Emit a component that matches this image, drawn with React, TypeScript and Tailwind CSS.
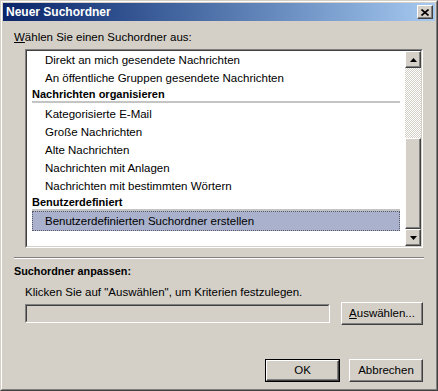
import React from 'react';

const raised =
  'border border-t-white border-l-white border-r-[#404040] border-b-[#404040] shadow-[inset_-1px_-1px_0_#808080]';

function ListRow({ text, header, line, spacer, selected }: { text: string; header?: boolean; line?: boolean; spacer?: boolean; selected?: boolean }) {
  if (header) {
    return (
      <div>
        <div className="h-[14px] leading-[14px] font-bold text-[11px]">{text}</div>
        {line && <div className="h-[2px] bg-[#c4c4c4]" />}
        {spacer && <div className="h-[2px]" />}
      </div>
    );
  }
  if (selected) {
    return (
      <div className="h-[20px] leading-[18px] pl-[12px] bg-[#a9b1cc] border border-dotted border-[#5a5a6a]">{text}</div>
    );
  }
  return <div className="h-[18px] leading-[18px] pl-[13px]">{text}</div>;
}

function Arrow({ down }: { down?: boolean }) {
  return (
    <svg width="7" height="4" viewBox="0 0 7 4">
      {down ? <path d="M0 0h7L3.5 4z" fill="#000" /> : <path d="M0 4h7L3.5 0z" fill="#000" />}
    </svg>
  );
}

function Button({ label, accel, isDefault, w }: { label: string; accel?: boolean; isDefault?: boolean; w: string }) {
  const content = accel ? (
    <>
      <span className="underline underline-offset-1">{label[0]}</span>
      {label.slice(1)}
    </>
  ) : (
    label
  );
  if (isDefault) {
    return (
      <div className={`${w} h-[23px] border border-black`}>
        <div className={`h-full w-full flex items-center justify-center ${raised} bg-[#d4d0c8]`}>{content}</div>
      </div>
    );
  }
  return <div className={`${w} h-[23px] flex items-center justify-center ${raised} bg-[#d4d0c8]`}>{content}</div>;
}

export default function App() {
  return (
    <div className="w-[438px] h-[391px] bg-[#d4d0c8] font-['Liberation_Sans',Arial,sans-serif] text-[11.5px] text-black border border-t-[#d4d0c8] border-l-[#d4d0c8] border-r-[#404040] border-b-[#404040]">
      <div className="h-full w-full border border-t-white border-l-white border-r-[#808080] border-b-[#808080] p-px flex flex-col">
        {/* Title bar */}
        <div className="h-[18px] flex items-center justify-between bg-gradient-to-r from-[#0a246a] to-[#a6caf0] pl-[3px] pr-[2px]">
          <span className="text-white font-bold text-[12px] leading-[18px]">Neuer Suchordner</span>
          <div className={`w-[16px] h-[14px] bg-[#d4d0c8] flex items-center justify-center ${raised}`}>
            <svg width="8" height="7" viewBox="0 0 8 7">
              <path d="M0.5 0.5l7 6M7.5 0.5l-7 6" stroke="#000" strokeWidth="1.6" />
            </svg>
          </div>
        </div>

        <div className="pl-[11px] mt-[9px] h-[14px] leading-[14px]">
          <span className="underline underline-offset-1">W</span>ählen Sie einen Suchordner aus:
        </div>

        {/* List box */}
        <div className="ml-[22px] mt-[5px] w-[398px] h-[199px] border border-t-[#808080] border-l-[#808080] border-r-white border-b-white">
          <div className="h-full w-full border border-t-[#404040] border-l-[#404040] border-r-[#d4d0c8] border-b-[#d4d0c8] bg-white flex">
            <div className="flex-1 px-[5px] overflow-hidden whitespace-nowrap">
              <ListRow text="Direkt an mich gesendete Nachrichten" />
              <ListRow text="An öffentliche Gruppen gesendete Nachrichten" />
              <ListRow text="Nachrichten organisieren" header line spacer />
              <ListRow text="Kategorisierte E-Mail" />
              <ListRow text="Große Nachrichten" />
              <ListRow text="Alte Nachrichten" />
              <ListRow text="Nachrichten mit Anlagen" />
              <ListRow text="Nachrichten mit bestimmten Wörtern" />
              <ListRow text="Benutzerdefiniert" header line />
              <ListRow text="Benutzerdefinierten Suchordner erstellen" selected />
            </div>
            {/* Scrollbar */}
            <div className="w-[16px] flex flex-col">
              <div className={`h-[17px] bg-[#d4d0c8] flex items-center justify-center ${raised}`}>
                <Arrow />
              </div>
              <div className="flex-1 bg-[repeating-conic-gradient(#ffffff_0_25%,#d4d0c8_0_50%)] bg-[length:2px_2px]" />
              <div className={`h-[91px] bg-[#d4d0c8] ${raised}`} />
              <div className={`h-[17px] bg-[#d4d0c8] flex items-center justify-center ${raised}`}>
                <Arrow down />
              </div>
            </div>
          </div>
        </div>

        {/* Separator */}
        <div className="ml-[11px] mt-[9px] w-[410px] h-[2px] border-t border-t-[#808080] border-b border-b-white" />

        <div className="pl-[11px] mt-[5px] h-[14px] leading-[14px] font-bold text-[10.8px]">Suchordner anpassen:</div>
        <div className="pl-[22px] mt-[7px] h-[14px] leading-[14px]">
          Klicken Sie auf "Auswählen", um Kriterien festzulegen.
        </div>

        <div className="mt-[3px] pl-[22px] flex items-center gap-[11px]">
          <div className="w-[305px] h-[19px] bg-[#d4d0c8] border border-t-[#808080] border-l-[#808080] border-r-white border-b-white">
            <div className="h-full w-full border border-t-[#404040] border-l-[#404040] border-r-[#d4d0c8] border-b-[#d4d0c8]" />
          </div>
          <Button label="Auswählen..." accel w="w-[82px]" />
        </div>

        <div className="mt-[34px] pr-[12px] flex justify-end gap-[9px]">
          <Button label="OK" isDefault w="w-[75px]" />
          <Button label="Abbrechen" w="w-[74px]" />
        </div>
      </div>
    </div>
  );
}
